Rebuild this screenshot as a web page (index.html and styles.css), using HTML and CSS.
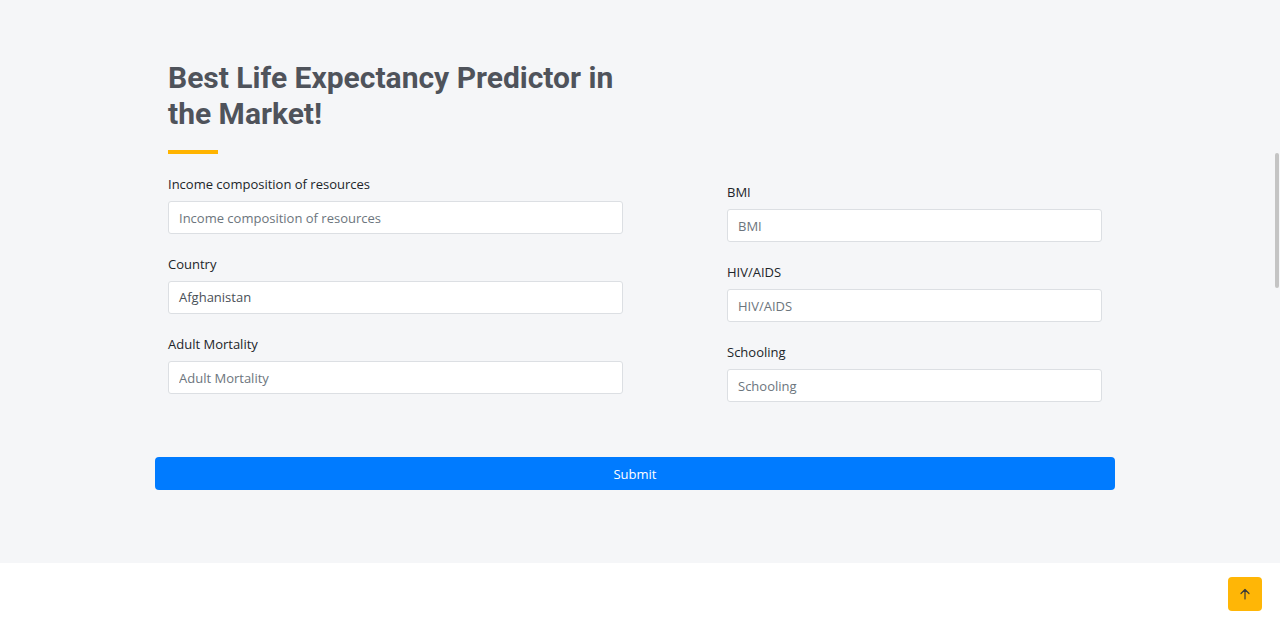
FILE: index.html
```html
<!DOCTYPE html>
<html lang="en">
<head>
<meta charset="utf-8">
<title>Life Expectancy Predictor</title>
<link rel="stylesheet" href="styles.css">
</head>
<body>
<section class="predict">
  <div class="container">
    <div class="intro">
      <h2 class="title">Best Life Expectancy Predictor in the Market!</h2>
      <span class="title-bar"></span>
    </div>
    <form class="form">
      <div class="fields">
        <div class="col col-left">
          <div class="group">
            <label class="label">Income composition of resources</label>
            <input class="control" type="text" placeholder="Income composition of resources">
          </div>
          <div class="group">
            <label class="label">Country</label>
            <div class="control select">Afghanistan</div>
          </div>
          <div class="group">
            <label class="label">Adult Mortality</label>
            <input class="control" type="text" placeholder="Adult Mortality">
          </div>
        </div>
        <div class="col col-right">
          <div class="group">
            <label class="label">BMI</label>
            <input class="control" type="text" placeholder="BMI">
          </div>
          <div class="group">
            <label class="label">HIV/AIDS</label>
            <input class="control" type="text" placeholder="HIV/AIDS">
          </div>
          <div class="group">
            <label class="label">Schooling</label>
            <input class="control" type="text" placeholder="Schooling">
          </div>
        </div>
      </div>
      <button class="submit" type="button">Submit</button>
    </form>
  </div>
</section>
<footer class="after"></footer>
<a class="to-top" href="#">
  <svg width="12" height="12" viewBox="0 0 12 12" fill="none" stroke="#3a3a3a" stroke-width="1.2" stroke-linecap="round" stroke-linejoin="round"><path d="M6 11V1.5M2 5.5L6 1.5L10 5.5"/></svg>
</a>
<div class="scroll-thumb"></div>
</body>
</html>
```
FILE: styles.css
```css
* { box-sizing: border-box; }
html, body { margin: 0; padding: 0; }
body {
  background: #ffffff;
  font-family: "Open Sans", "Noto Sans", sans-serif;
  color: #212529;
  height: 617px;
  overflow: hidden;
}
.predict {
  background: #f5f6f8;
  padding: 60px 0 73px;
}
.container {
  width: 960px;
  margin-left: 155px;
}
.intro {
  padding-left: 13px;
  margin-bottom: 18px;
}
.title {
  margin: 0;
  width: 470px;
  font-family: Roboto, "Liberation Sans", sans-serif;
  font-weight: 700;
  font-size: 30px;
  line-height: 36px;
  color: #4f535b;
}
.title-bar {
  display: block;
  margin-top: 18px;
  width: 50px;
  height: 4px;
  background: #ffb400;
}
.fields {
  display: flex;
  padding-left: 13px;
  gap: 104px;
}
.col-left { width: 455px; }
.col-right { width: 375px; padding-top: 8px; }
.group { margin-bottom: 18px; }
.label {
  display: block;
  font-size: 13px;
  line-height: 21px;
  padding-top: 2px;
  margin-bottom: 6px;
  color: #212529;
}
.control {
  display: block;
  width: 100%;
  height: 33px;
  padding: 0 10px;
  border: 1px solid #dcdfe3;
  border-radius: 3px;
  background: #ffffff;
  font-family: "Open Sans", "Noto Sans", sans-serif;
  font-size: 13px;
  color: #495057;
  outline: none;
}
.control::placeholder { color: #6c757d; }
.select {
  line-height: 31px;
}
.submit {
  display: block;
  width: 960px;
  height: 33px;
  margin-top: 37px;
  border: 0;
  border-radius: 4px;
  background: #007bff;
  color: #ffffff;
  font-family: "Open Sans", "Noto Sans", sans-serif;
  font-size: 13px;
}
.after { height: 54px; background: #ffffff; }
.to-top {
  position: fixed;
  right: 18px;
  bottom: 6px;
  width: 34px;
  height: 34px;
  border-radius: 4px;
  background: #ffb606;
  display: flex;
  align-items: center;
  justify-content: center;
}
.scroll-thumb {
  position: fixed;
  right: 1px;
  top: 153px;
  width: 4px;
  height: 135px;
  border-radius: 2px;
  background: #c4c4c4;
}
```
